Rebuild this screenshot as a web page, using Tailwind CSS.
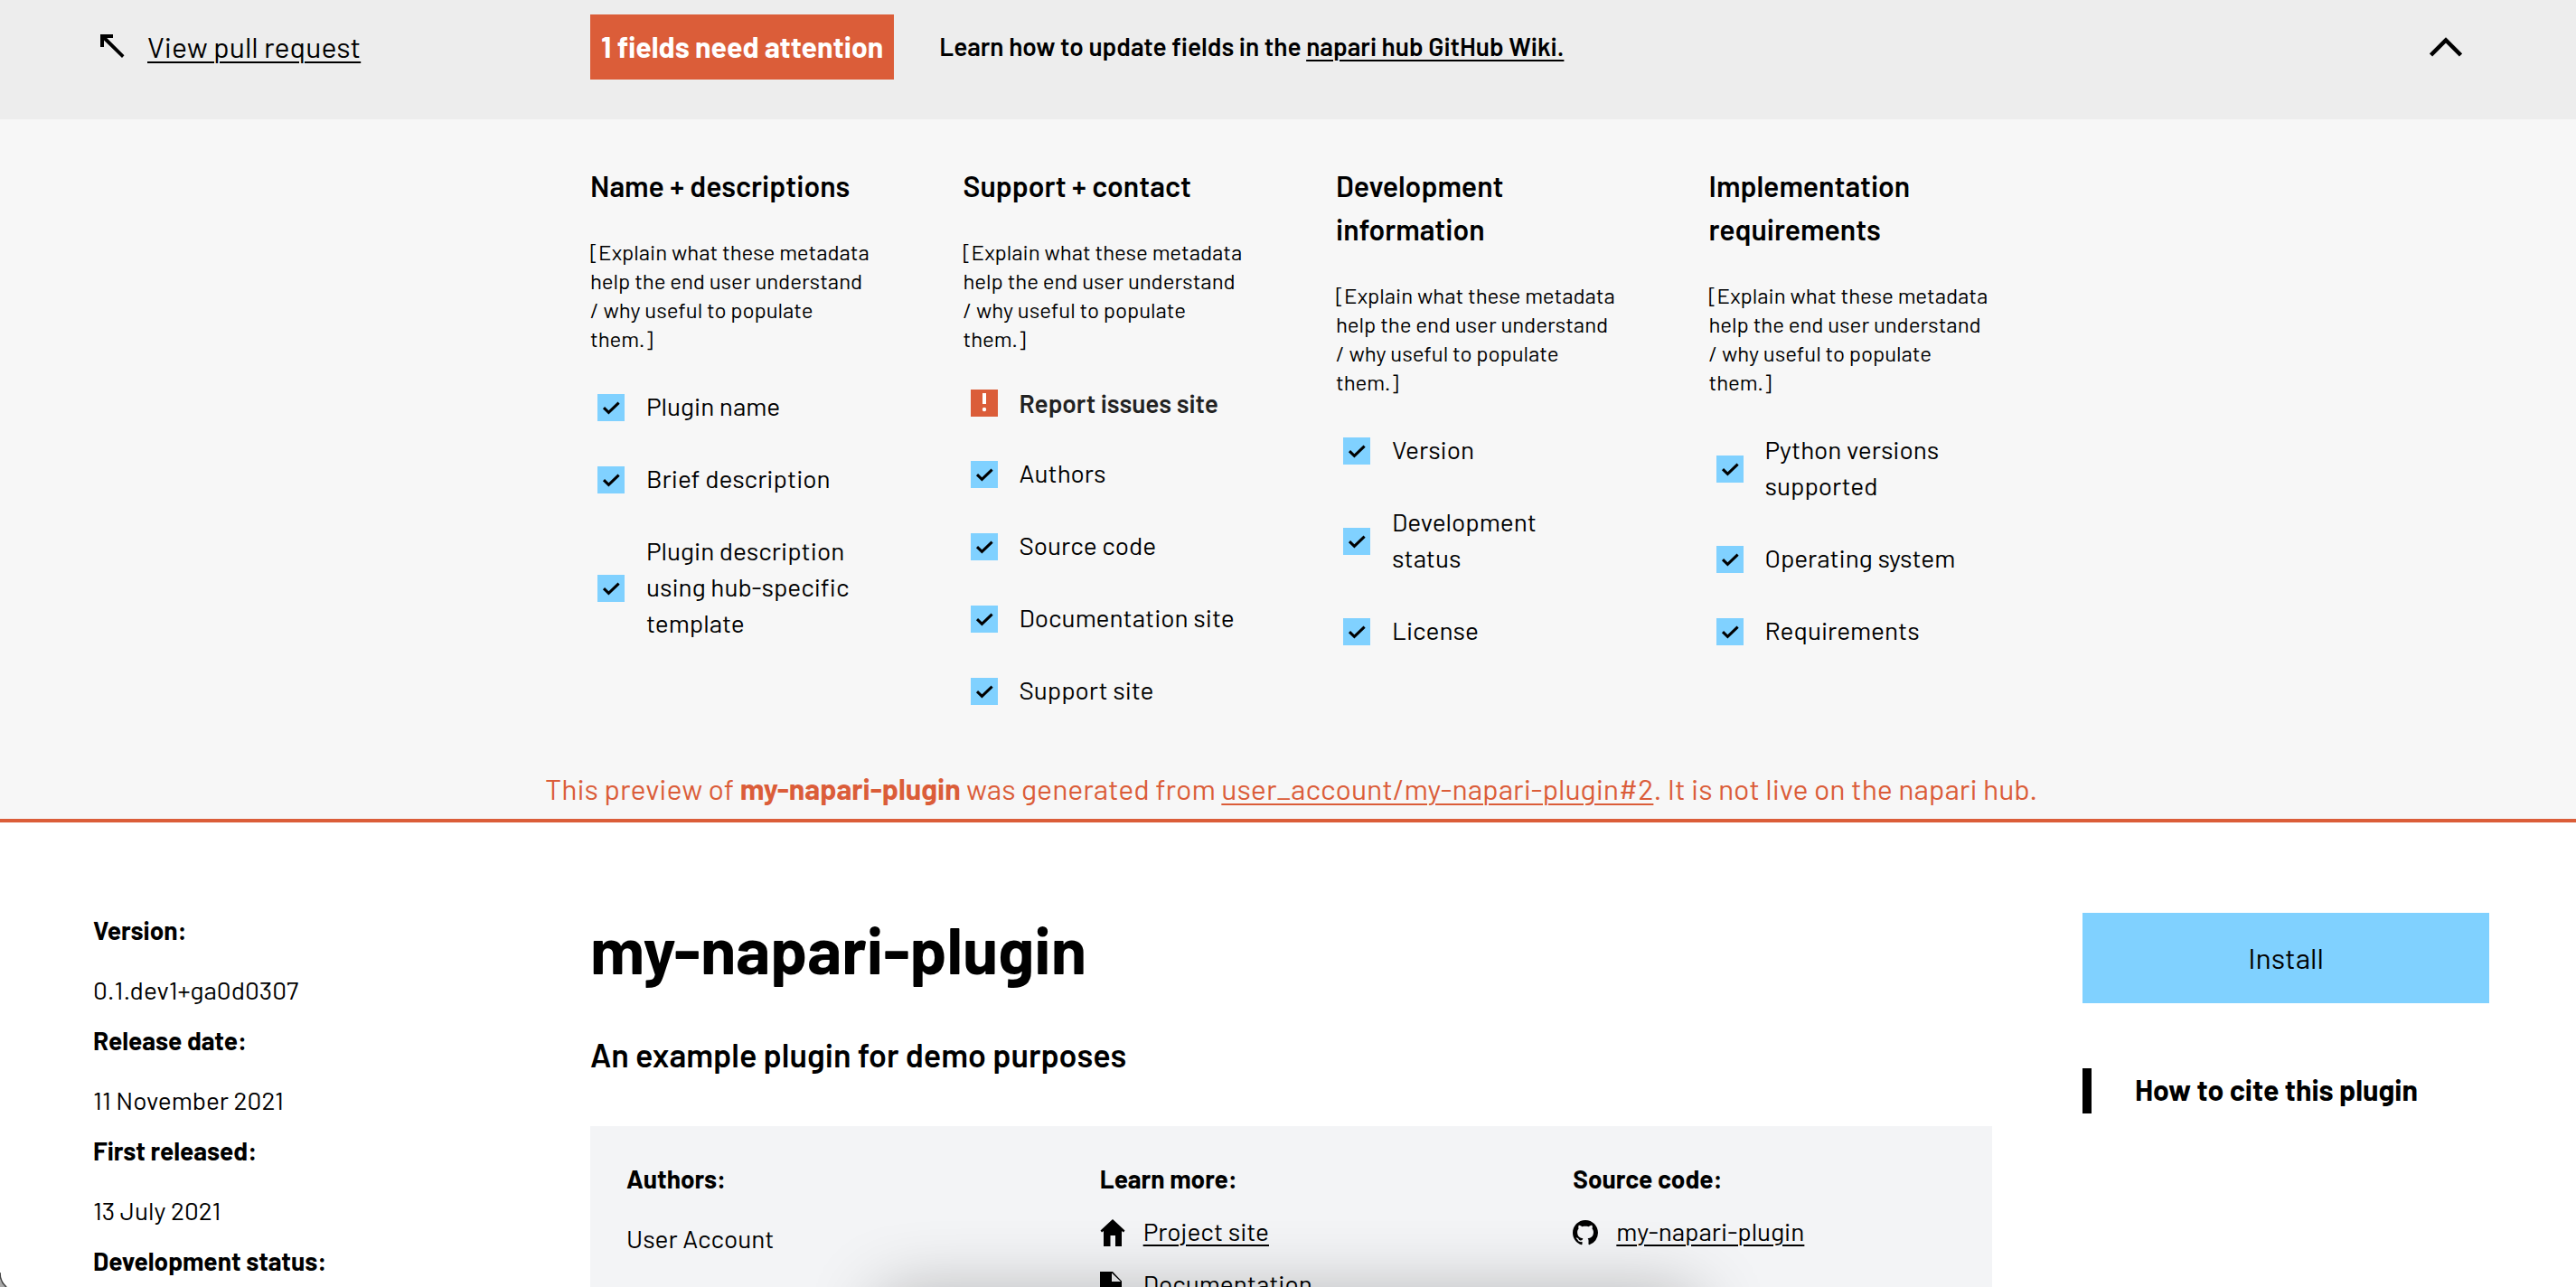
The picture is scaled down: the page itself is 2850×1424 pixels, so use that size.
<!DOCTYPE html>
<html lang="en">
<head>
<meta charset="utf-8">
<meta name="viewport" content="width=device-width, initial-scale=1">
<title>my-napari-plugin</title>
<script src="https://cdn.jsdelivr.net/npm/@tailwindcss/browser@4"></script>
</head>
<body class="relative h-screen overflow-hidden bg-white font-[Barlow,Roboto,sans-serif] text-[28px] leading-[38px] text-black">

<svg class="hidden" aria-hidden="true">
  <symbol id="check" viewBox="0 0 30 30">
    <rect width="30" height="30" fill="#80d1ff"/>
    <path d="M7 15.2l5.4 5.2L23.6 9.6" fill="none" stroke="#000" stroke-width="3"/>
  </symbol>
  <symbol id="alert" viewBox="0 0 30 30">
    <rect width="30" height="30" fill="#db5d39"/>
    <path d="M13 4h4v12h-4z" fill="#fff"/>
    <circle cx="15" cy="22" r="2.2" fill="#fff"/>
  </symbol>
</svg>

<header class="grid grid-cols-[450px_1fr] gap-x-[100px] bg-[#ededed] pt-4 pr-24 pb-11 pl-[103px] text-[32px] leading-[48px]">
  <div class="flex items-center gap-6 pb-0.5 pl-2">
    <svg class="size-7" viewBox="0 0 28 28" aria-hidden="true"><path d="M0 1h14v4H7.2L26.5 24.3 24 27 4 7.500V15H0z"/></svg>
    <a href="#pull" class="underline decoration-2 underline-offset-4">View pull request</a>
  </div>
  <div class="flex items-center">
    <strong class="bg-[#db5d39] px-3 pt-[11px] pb-[13px] font-bold text-white">1 fields need attention</strong>
    <p class="ml-[50px] pb-0.5 text-[28px] font-semibold">Learn how to update fields in the <a href="#wiki" class="underline decoration-2 underline-offset-4">napari hub GitHub Wiki.</a></p>
    <button type="button" aria-label="Collapse" class="mr-[30px] ml-auto">
      <svg class="h-[22px] w-9" viewBox="0 0 36 22" fill="none" stroke="#000" stroke-width="4.500" aria-hidden="true"><path d="M1.500 20L18 3.500 34.500 20"/></svg>
    </button>
  </div>
</header>

<section class="border-b-4 border-[#db5d39] bg-[#f7f7f7] pt-[49px] pr-24 pb-2.5 pl-[103px]">
  <div class="mr-[551px] ml-[550px] grid grid-cols-4 gap-x-[100px]">
    <div>
      <h2 class="text-[32px] leading-[48px] font-semibold">Name + descriptions</h2>
      <p class="mt-[34px] text-[24px] leading-[32px]">[Explain what these metadata help the end user understand / why useful to populate them.]</p>
      <ul class="mt-[38px] flex flex-col gap-10 pr-2.5 pl-2 leading-[40px]">
        <li class="flex items-center gap-6"><svg class="mt-1 size-[30px] shrink-0"><use href="#check"/></svg>Plugin name</li>
        <li class="flex items-center gap-6"><svg class="mt-1 size-[30px] shrink-0"><use href="#check"/></svg>Brief description</li>
        <li class="flex items-center gap-6"><svg class="mt-1 size-[30px] shrink-0"><use href="#check"/></svg>Plugin description using hub-specific template</li>
      </ul>
    </div>
    <div>
      <h2 class="text-[32px] leading-[48px] font-semibold">Support + contact</h2>
      <p class="mt-[34px] text-[24px] leading-[32px]">[Explain what these metadata help the end user understand / why useful to populate them.]</p>
      <ul class="mt-[38px] flex flex-col gap-10 pr-2.5 pl-2 leading-[40px]">
        <li class="flex items-center gap-6 leading-[34px] font-semibold text-[#222]"><svg class="size-[30px] shrink-0"><use href="#alert"/></svg>Report issues site</li>
        <li class="flex items-center gap-6"><svg class="mt-1 size-[30px] shrink-0"><use href="#check"/></svg>Authors</li>
        <li class="flex items-center gap-6"><svg class="mt-1 size-[30px] shrink-0"><use href="#check"/></svg>Source code</li>
        <li class="flex items-center gap-6"><svg class="mt-1 size-[30px] shrink-0"><use href="#check"/></svg>Documentation site</li>
        <li class="flex items-center gap-6"><svg class="mt-1 size-[30px] shrink-0"><use href="#check"/></svg>Support site</li>
      </ul>
    </div>
    <div>
      <h2 class="text-[32px] leading-[48px] font-semibold">Development information</h2>
      <p class="mt-[34px] text-[24px] leading-[32px]">[Explain what these metadata help the end user understand / why useful to populate them.]</p>
      <ul class="mt-[38px] flex flex-col gap-10 pr-2.5 pl-2 leading-[40px]">
        <li class="flex items-center gap-6"><svg class="mt-1 size-[30px] shrink-0"><use href="#check"/></svg>Version</li>
        <li class="flex items-center gap-6"><svg class="mt-1 size-[30px] shrink-0"><use href="#check"/></svg><span>Development<br>status</span></li>
        <li class="flex items-center gap-6"><svg class="mt-1 size-[30px] shrink-0"><use href="#check"/></svg>License</li>
      </ul>
    </div>
    <div>
      <h2 class="text-[32px] leading-[48px] font-semibold">Implementation requirements</h2>
      <p class="mt-[34px] text-[24px] leading-[32px]">[Explain what these metadata help the end user understand / why useful to populate them.]</p>
      <ul class="mt-[38px] flex flex-col gap-10 pr-2.5 pl-2 leading-[40px]">
        <li class="flex items-center gap-6"><svg class="mt-1 size-[30px] shrink-0"><use href="#check"/></svg>Python versions supported</li>
        <li class="flex items-center gap-6"><svg class="mt-1 size-[30px] shrink-0"><use href="#check"/></svg>Operating system</li>
        <li class="flex items-center gap-6"><svg class="mt-1 size-[30px] shrink-0"><use href="#check"/></svg>Requirements</li>
      </ul>
    </div>
  </div>
  <p class="mt-[65px] text-center text-[32px] leading-[48px] text-[#db5d39]">This preview of <strong class="font-bold">my-napari-plugin</strong> was generated from <a href="#pull" class="underline decoration-2 underline-offset-4">user_account/my-napari-plugin#2</a>. It is not live on the napari hub.</p>
</section>

<main class="grid grid-cols-[450px_1fr_450px] gap-x-[100px] pt-[100px] pr-24 pl-[103px]">
  <dl class="flex flex-col">
    <dt class="font-bold">Version:</dt>
    <dd class="mt-7 mb-[18px]">0.1.dev1+ga0d0307</dd>
    <dt class="font-bold">Release date:</dt>
    <dd class="mt-7 mb-[18px]">11 November 2021</dd>
    <dt class="font-bold">First released:</dt>
    <dd class="mt-7 mb-[18px]">13 July 2021</dd>
    <dt class="font-bold">Development status:</dt>
  </dl>

  <article>
    <h1 class="text-[72px] leading-[78px] font-bold">my-napari-plugin</h1>
    <p class="mt-[52px] text-[36px] leading-[54px] font-semibold">An example plugin for demo purposes</p>
    <div class="mt-[52px] grid grid-cols-3 gap-x-[100px] bg-[#f3f4f6] px-10 pt-[39px] pb-10">
      <div>
        <h2 class="font-bold">Authors:</h2>
        <p class="mt-7">User Account</p>
      </div>
      <div>
        <h2 class="font-bold">Learn more:</h2>
        <ul class="mt-5 flex flex-col gap-5">
          <li class="flex items-center gap-5">
            <svg class="mt-1 h-[30px] w-7" viewBox="0 0 28 30" aria-hidden="true"><path d="M14 0l13.500 12.500-1.500 2-2-1.500v17h-7V18h-5.500v12h-7.500V13l-2 1.500-1.500-2z"/></svg>
            <a href="#site" class="underline decoration-2 underline-offset-4">Project site</a>
          </li>
          <li class="flex items-center gap-5">
            <svg class="mt-1 h-[30px] w-7" viewBox="0 0 28 30" aria-hidden="true"><path fill-rule="evenodd" d="M0 0h14l10 10.500V30H0zM13 1.500V11h10z"/></svg>
            <a href="#docs" class="underline decoration-2 underline-offset-4">Documentation</a>
          </li>
        </ul>
      </div>
      <div>
        <h2 class="font-bold">Source code:</h2>
        <ul class="mt-5">
          <li class="flex items-center gap-5">
            <svg class="mt-1 size-7" viewBox="0 0 16 16" aria-hidden="true"><path d="M8 0C3.580 0 0 3.580 0 8c0 3.540 2.290 6.530 5.470 7.590.4.070.55-.17.55-.38 0-.19-.01-.82-.01-1.490-2.010.37-2.530-.49-2.690-.94-.09-.23-.48-.94-.82-1.130-.28-.15-.68-.52-.01-.53.63-.01 1.080.58 1.230.82.72 1.210 1.870.87 2.330.66.07-.52.28-.87.51-1.070-1.780-.2-3.640-.89-3.640-3.950 0-.87.31-1.590.82-2.150-.08-.2-.36-1.020.08-2.120 0 0 .67-.21 2.200.82.64-.18 1.320-.27 2-.27s1.360.09 2 .27c1.530-1.040 2.200-.82 2.200-.82.44 1.100.16 1.920.08 2.120.51.56.82 1.270.82 2.150 0 3.070-1.870 3.750-3.650 3.950.29.25.54.73.54 1.480 0 1.070-.01 1.930-.01 2.200 0 .21.15.46.55.38A8.010 8.010 0 0 0 16 8c0-4.420-3.580-8-8-8z"/></svg>
            <a href="#source" class="underline decoration-2 underline-offset-4">my-napari-plugin</a>
          </li>
        </ul>
      </div>
    </div>
  </article>

  <aside class="text-[32px]">
    <button type="button" class="h-[100px] w-full bg-[#80d1ff] pb-0.5 leading-[48px]">Install</button>
    <h2 class="mt-[72px] border-l-[10px] border-black pb-1 pl-12 leading-[46px] font-bold">How to cite this plugin</h2>
  </aside>
</main>

<!-- soft shadow rising from below the window, and the window's rounded corner -->
<div class="pointer-events-none absolute top-full left-1/2 mt-2.5 h-20 w-[900px] -translate-x-1/2 shadow-[0_0_80px_rgba(0,0,0,0.3)]"></div>
<svg class="absolute bottom-0 left-0 h-4 w-2" viewBox="0 0 8 16" aria-hidden="true"><path d="M0 0q0 10 8 16H0z" fill="#aaa"/><path d="M0 0q0 10 7 16" fill="none" stroke="#444" stroke-width="1.500"/></svg>
</body>
</html>
